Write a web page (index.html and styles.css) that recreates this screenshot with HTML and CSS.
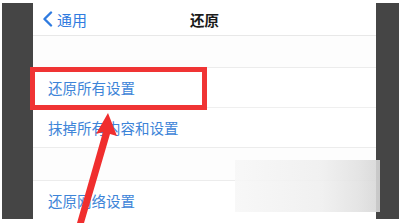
FILE: index.html
```html
<!DOCTYPE html>
<html lang="zh-CN">
<head>
    <meta charset="UTF-8">
    <title>还原</title>
    <link rel="stylesheet" href="styles.css">
</head>
<body>
<div class="frame">
    <div class="side side-left"></div>
    <div class="screen">
        <div class="nav">
            <div class="nav-back">
                <svg class="chevron" width="11" height="16" viewBox="0 0 11 16">
                    <path d="M9 1.5 L2.5 8 L9 14.5" fill="none" stroke="#2f7be0" stroke-width="2.4" stroke-linecap="round" stroke-linejoin="round"/>
                </svg>
                <span>通用</span>
            </div>
            <div class="nav-title">还原</div>
            <div></div>
        </div>

        <div class="gap"></div>
        <div class="group">
            <div class="row">还原所有设置</div>
            <div class="row">抹掉所有内容和设置</div>
        </div>

        <div class="gap gap-small"></div>
        <div class="group">
            <div class="row">还原网络设置</div>
        </div>
    </div>
    <div class="side side-right"></div>
</div>

<!-- annotations over the screenshot -->
<div class="highlight"></div>
<div class="watermark"></div>
<svg class="arrow" width="404" height="223" viewBox="0 0 404 223">
    <polygon points="108,113 117,136 110,134 84,223 77,223 103,132 96,134" fill="#f02e2e"/>
</svg>
</body>
</html>
```

FILE: styles.css
```css
body {
    margin: 0;
    width: 404px;
    height: 223px;
    overflow: hidden;
    background-color: #ffffff;
    font-family: "Noto Sans CJK SC", "Noto Sans", sans-serif;
    position: relative;
}

.frame {
    display: flex;
    height: 216px;
    padding: 3px 5px 4px 2px;
}

.side {
    background-color: #454545;
}

.side-left {
    width: 31px;
}

.side-right {
    width: 23px;
}

.screen {
    flex: 1;
    background-color: #ffffff;
    overflow: hidden;
}

.nav {
    display: grid;
    grid-template-columns: 1fr auto 1fr;
    align-items: center;
    height: 32px;
    border-bottom: 1px solid #e8e8e8;
}

.nav-back {
    display: flex;
    align-items: center;
    gap: 4px;
    padding-left: 9px;
    color: #2f7be0;
    font-size: 15px;
}

.nav-title {
    font-size: 14.5px;
    font-weight: bold;
    color: #1a1a1a;
}

.gap {
    height: 31px;
    background-color: #fdfdfd;
}

.gap-small {
    height: 32px;
}

.group {
    border-top: 1px solid #ececec;
    border-bottom: 1px solid #ececec;
}

.row {
    height: 39px;
    line-height: 39px;
    padding-left: 15px;
    font-size: 14.5px;
    color: #3d84d8;
    border-bottom: 1px solid #efefef;
}

.row:last-child {
    border-bottom: none;
}

.highlight {
    position: absolute;
    left: 30px;
    top: 67px;
    width: 167px;
    height: 33px;
    border: 5px solid #f03434;
}

.watermark {
    position: absolute;
    left: 235px;
    top: 160px;
    width: 145px;
    height: 52px;
    background: linear-gradient(90deg, #f7f7f7 0%, #efefef 60%, #e2e2e2 85%, #d6d6d6 100%);
    opacity: 0.9;
}

.arrow {
    position: absolute;
    left: 0;
    top: 0;
}
```
